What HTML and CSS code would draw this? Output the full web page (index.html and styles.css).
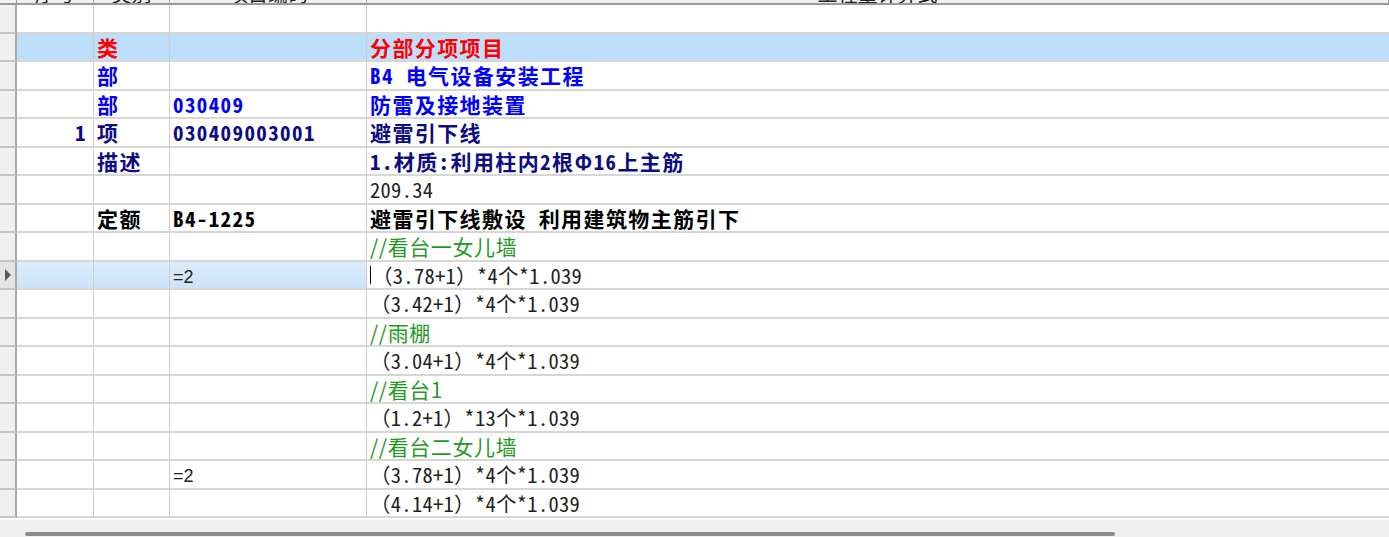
FILE: index.html
```html
<!DOCTYPE html>
<html lang="zh-CN">

<head>
    <meta charset="UTF-8">
    <meta name="viewport" content="width=device-width, initial-scale=1.0">
    <title>工程量计算</title>
    <link rel="stylesheet" href="styles.css">
</head>

<body>
    <div class="sheet">
        <div class="grid">
            <div class="row head">
                <div class="rh"></div>
                <div class="c">序号</div>
                <div class="c">类别</div>
                <div class="c">项目编码</div>
                <div class="c">工程量计算式</div>
            </div>

            <div class="row">
                <div class="rh"></div>
                <div class="c no"></div>
                <div class="c kind"></div>
                <div class="c code"></div>
                <div class="c name"></div>
            </div>
            <div class="row cat">
                <div class="rh"></div>
                <div class="c no"></div>
                <div class="c kind bold red">类</div>
                <div class="c code"></div>
                <div class="c name bold red">分部分项项目</div>
            </div>
            <div class="row">
                <div class="rh"></div>
                <div class="c no"></div>
                <div class="c kind bold blue">部</div>
                <div class="c code"></div>
                <div class="c name bold blue">B4 电气设备安装工程</div>
            </div>
            <div class="row">
                <div class="rh"></div>
                <div class="c no"></div>
                <div class="c kind bold blue">部</div>
                <div class="c code bold blue">030409</div>
                <div class="c name bold blue">防雷及接地装置</div>
            </div>
            <div class="row">
                <div class="rh"></div>
                <div class="c no bold navy">1</div>
                <div class="c kind bold navy">项</div>
                <div class="c code bold navy">030409003001</div>
                <div class="c name bold navy">避雷引下线</div>
            </div>
            <div class="row">
                <div class="rh"></div>
                <div class="c no"></div>
                <div class="c kind bold navy">描述</div>
                <div class="c code"></div>
                <div class="c name bold navy">1.材质:利用柱内2根Φ16上主筋</div>
            </div>
            <div class="row">
                <div class="rh"></div>
                <div class="c no"></div>
                <div class="c kind"></div>
                <div class="c code"></div>
                <div class="c name plain">209.34</div>
            </div>
            <div class="row">
                <div class="rh"></div>
                <div class="c no"></div>
                <div class="c kind bold black">定额</div>
                <div class="c code bold black">B4-1225</div>
                <div class="c name bold black">避雷引下线敷设 利用建筑物主筋引下</div>
            </div>
            <div class="row">
                <div class="rh"></div>
                <div class="c no"></div>
                <div class="c kind"></div>
                <div class="c code"></div>
                <div class="c name green">//看台一女儿墙</div>
            </div>
            <div class="row current">
                <div class="rh"><span class="arrow"></span></div>
                <div class="c no"></div>
                <div class="c kind"></div>
                <div class="c code expr">=2</div>
                <div class="c name plain"><span class="caret"></span>（3.78+1）*4个*1.039</div>
            </div>
            <div class="row">
                <div class="rh"></div>
                <div class="c no"></div>
                <div class="c kind"></div>
                <div class="c code"></div>
                <div class="c name plain">（3.42+1）*4个*1.039</div>
            </div>
            <div class="row">
                <div class="rh"></div>
                <div class="c no"></div>
                <div class="c kind"></div>
                <div class="c code"></div>
                <div class="c name green">//雨棚</div>
            </div>
            <div class="row">
                <div class="rh"></div>
                <div class="c no"></div>
                <div class="c kind"></div>
                <div class="c code"></div>
                <div class="c name plain">（3.04+1）*4个*1.039</div>
            </div>
            <div class="row">
                <div class="rh"></div>
                <div class="c no"></div>
                <div class="c kind"></div>
                <div class="c code"></div>
                <div class="c name green">//看台1</div>
            </div>
            <div class="row">
                <div class="rh"></div>
                <div class="c no"></div>
                <div class="c kind"></div>
                <div class="c code"></div>
                <div class="c name plain">（1.2+1）*13个*1.039</div>
            </div>
            <div class="row">
                <div class="rh"></div>
                <div class="c no"></div>
                <div class="c kind"></div>
                <div class="c code"></div>
                <div class="c name green">//看台二女儿墙</div>
            </div>
            <div class="row">
                <div class="rh"></div>
                <div class="c no"></div>
                <div class="c kind"></div>
                <div class="c code expr">=2</div>
                <div class="c name plain">（3.78+1）*4个*1.039</div>
            </div>
            <div class="row">
                <div class="rh"></div>
                <div class="c no"></div>
                <div class="c kind"></div>
                <div class="c code"></div>
                <div class="c name plain">（4.14+1）*4个*1.039</div>
            </div>
        </div>

        <div class="hscroll">
            <div class="thumb"></div>
        </div>
    </div>
</body>

</html>
```

FILE: styles.css
```css
body {
    margin: 0;
    background: #ffffff;
    overflow: hidden;
    font-family: "Noto Sans Mono CJK SC", "Noto Sans CJK SC", monospace;
}

.sheet {
    width: 1389px;
    height: 537px;
    overflow: hidden;
    display: flex;
    flex-direction: column;
}

.grid {
    margin-top: -23px;
}

.row {
    display: grid;
    grid-template-columns: 17px 77px 76px 197px 1fr;
    height: 28.5px;
    box-sizing: border-box;
}

.c {
    display: flex;
    align-items: center;
    box-sizing: border-box;
    border-right: 1px solid #cdcdcd;
    border-bottom: 2px solid #d6d6d6;
    padding-left: 3px;
    white-space: nowrap;
    overflow: hidden;
}

.c.name {
    border-right: none;
}

.rh {
    background: #f0f0f0;
    box-sizing: border-box;
    border-right: 2px solid #a9a9a9;
    border-bottom: 2px solid #c4c4c4;
    display: flex;
    align-items: center;
}

/* column header, only its lower edge is visible */
.head {
    height: 28px;
}

.head .c,
.head .rh {
    background: #f0f0f0;
    border-right: 1px solid #a0a0a0;
    border-bottom: 2px solid #9a9a9a;
    justify-content: center;
    font-family: "Noto Sans CJK SC", sans-serif;
    font-size: 20px;
    color: #222;
    padding-left: 0;
    align-items: flex-end;
    line-height: 19px;
}

.c.no {
    justify-content: flex-end;
    padding-right: 6px;
}

.cat .c {
    background: #bedffb;
}

.current .c.no,
.current .c.kind,
.current .c.code {
    background: linear-gradient(#dcedfc, #cbe3f8);
}

.current .rh {
    background: #e4e4e4;
}

.arrow {
    margin-left: 5px;
    width: 0;
    height: 0;
    border-top: 6px solid transparent;
    border-bottom: 6px solid transparent;
    border-left: 6px solid #5a5a5a;
}

.caret {
    display: inline-block;
    width: 1px;
    height: 18px;
    background: #000;
    margin-right: 1px;
}

.bold {
    font-weight: 700;
    font-size: 21px;
    letter-spacing: 1.4px;
}

.plain {
    font-size: 20.5px;
    letter-spacing: 0.3px;
    color: #1e1e1e;
}

.green {
    font-family: "Noto Sans CJK SC", sans-serif;
    font-size: 21px;
    letter-spacing: 0.6px;
    color: #1f9a1f;
}

.expr {
    font-family: "Liberation Sans", sans-serif;
    font-size: 18px;
    color: #222;
    padding-top: 5px;
}

.red {
    color: #ff0000;
}

.blue {
    color: #0000ff;
}

.navy {
    color: #0c0c84;
}

.black {
    color: #000000;
}

.hscroll {
    flex: 1;
    background: #f0f0f0;
    border-top: 2px solid #ffffff;
    padding-top: 12px;
}

.thumb {
    margin-left: 25px;
    width: 1090px;
    height: 4px;
    border-radius: 2px;
    background: #8c8c8c;
}
```
